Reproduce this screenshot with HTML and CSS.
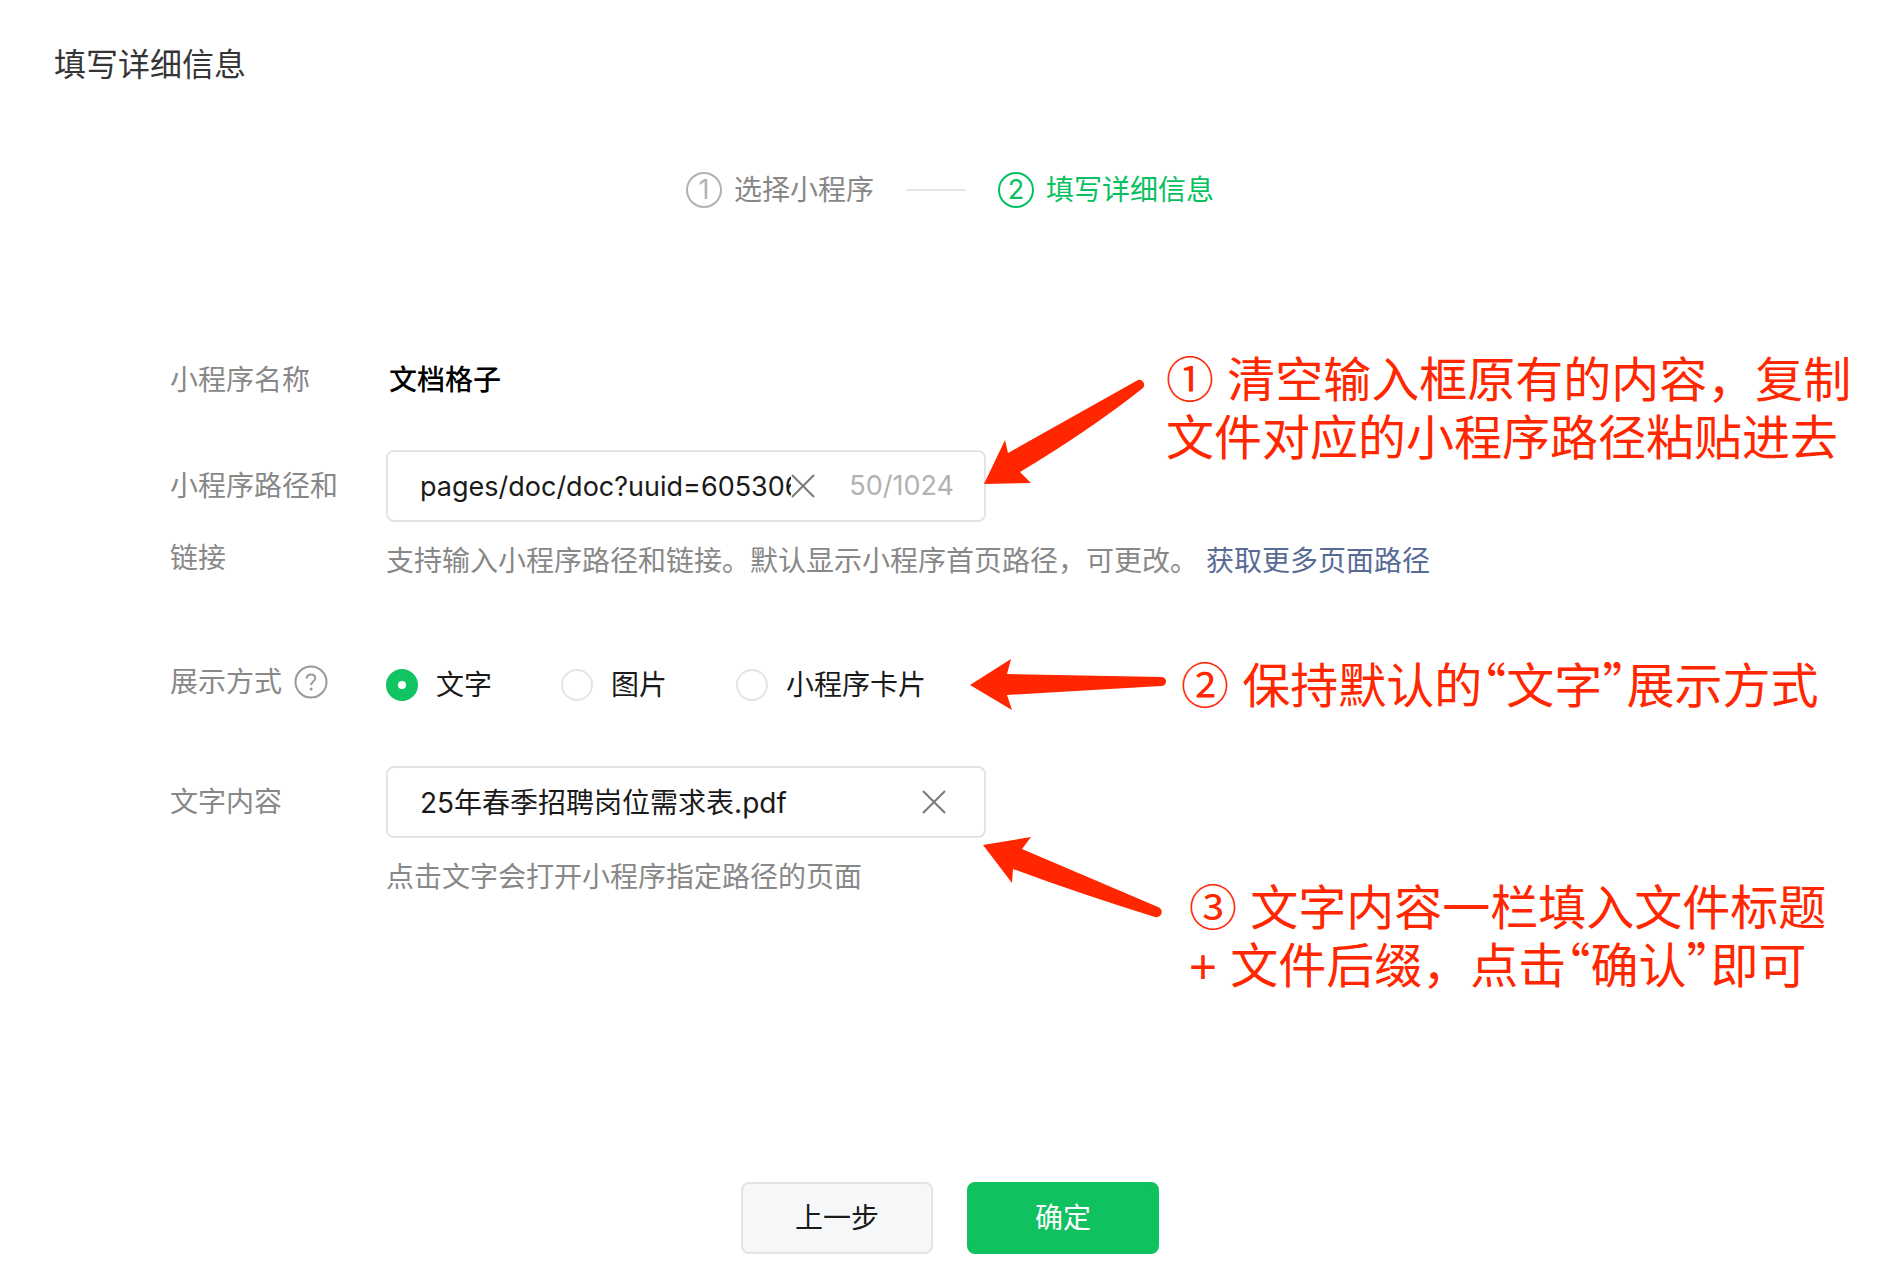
FILE: index.html
```html
<!DOCTYPE html>
<html lang="zh-CN">
<head>
<meta charset="utf-8">
<meta name="viewport" content="width=device-width, initial-scale=1">
<title>填写详细信息</title>
<link rel="stylesheet" href="styles.css">
</head>
<body>
<main class="page">
  <h1 class="title">填写详细信息</h1>

  <ol class="steps">
    <li class="step"><span class="step-num">1</span>选择小程序</li>
    <li class="step-line" aria-hidden="true"></li>
    <li class="step step-active" aria-current="step"><span class="step-num">2</span>填写详细信息</li>
  </ol>

  <form class="form" id="detail">
    <div class="row row-name">
      <span class="label">小程序名称</span>
      <div class="content name">文档格子</div>
    </div>

    <div class="row">
      <label class="label" for="path">小程序路径和链接</label>
      <div class="content">
        <div class="field">
          <input class="input input-path" id="path" type="text" value="pages/doc/doc?uuid=605306">
          <button class="clear" type="button" aria-label="清空路径"><svg viewBox="0 0 24 24"><path d="M1 1 23 23M23 1 1 23"/></svg></button>
          <span class="counter">50/1024</span>
        </div>
        <p class="help">支持输入小程序路径和链接。默认显示小程序首页路径，可更改。 <a class="link" href="#">获取更多页面路径</a></p>
      </div>
      <aside class="note note-path">
        <svg class="arrow" width="162" height="106" viewBox="0 0 162 106"><path d="M0 106 21 62 24 75 154 2A5 5 0 0 1 159 10Q106 52 36 94L47 105Z"/></svg>
        <p>① 清空输入框原有的内容，复制<br>文件对应的小程序路径粘贴进去</p>
      </aside>
    </div>

    <div class="row row-mode">
      <span class="label" id="mode-label">展示方式
        <svg class="question" viewBox="0 0 34 34"><circle cx="17" cy="17" r="15.5"/><path d="M12.6 13.6C12.8 10.900 14.600 9.500 17 9.500c2.500 0 4.300 1.500 4.300 3.700 0 3.200-4.200 3.500-4.200 7"/><circle class="dot" cx="17.100" cy="24" r="1.500"/></svg>
      </span>
      <div class="content options" role="radiogroup" aria-labelledby="mode-label">
        <label class="option"><input class="radio" type="radio" name="mode" checked>文字</label>
        <label class="option"><input class="radio" type="radio" name="mode">图片</label>
        <label class="option"><input class="radio" type="radio" name="mode">小程序卡片</label>
      </div>
      <aside class="note note-mode">
        <svg class="arrow" width="196" height="52" viewBox="0 0 196 52"><path d="M0 26 41 0 37 15 192 18A4 4 0 0 1 191 27L37 36 42 51Z"/></svg>
        <p>② 保持默认的<span class="quote">“</span>文字<span class="quote">”</span>展示方式</p>
      </aside>
    </div>

    <div class="row">
      <label class="label" for="text">文字内容</label>
      <div class="content">
        <div class="field field-text">
          <input class="input" id="text" type="text" value="25年春季招聘岗位需求表.pdf">
          <button class="clear" type="button" aria-label="清空文字"><svg viewBox="0 0 24 24"><path d="M1 1 23 23M23 1 1 23"/></svg></button>
        </div>
        <p class="help">点击文字会打开小程序指定路径的页面</p>
      </div>
      <aside class="note note-text">
        <svg class="arrow" width="180" height="82" viewBox="0 0 180 82"><path d="M0 8 48 0 39 12 175 70A5 5 0 0 1 172 80Q100 58 30 32L29 46Z"/></svg>
        <p>③ 文字内容一栏填入文件标题<br>+ 文件后缀，点击<span class="quote">“</span>确认<span class="quote">”</span>即可</p>
      </aside>
    </div>
  </form>

  <footer class="actions">
    <button class="btn" type="button">上一步</button>
    <button class="btn btn-primary" type="submit" form="detail">确定</button>
  </footer>
</main>
</body>
</html>
```
FILE: styles.css
```css
* {
  box-sizing: border-box;
}

body {
  margin: 0;
  background: #fff;
  color: #1a1a1a;
  font: 28px/42px Inter, "Noto Sans CJK SC", sans-serif;
}

p {
  margin: 0;
}

.page {
  display: flex;
  flex-direction: column;
  min-height: 100vh;
  padding: 44px 52px 24px 54px;
}

.title {
  margin: 0;
  color: #353535;
  font-size: 32px;
  font-weight: 400;
}

/* Progress */
.steps {
  display: flex;
  justify-content: center;
  align-items: center;
  gap: 32px;
  margin: 83px 0 0;
  padding: 0;
  list-style: none;
}

.step {
  display: flex;
  align-items: center;
  gap: 12px;
  color: #888;
}

.step-num {
  width: 36px;
  height: 36px;
  border: 2px solid #b2b2b2;
  border-radius: 50%;
  color: #b2b2b2;
  font-size: 27px;
  line-height: 32px;
  text-align: center;
}

.step-line {
  width: 60px;
  height: 2px;
  background: #e4e4e4;
}

.step-active,
.step-active .step-num {
  border-color: #07c160;
  color: #07c160;
}

/* Form */
.form {
  display: flex;
  flex-direction: column;
  gap: 48px;
  margin-top: 147px;
  padding-left: 116px;
}

.row {
  position: relative;
  display: flex;
  line-height: 72px;
}

.row-name {
  line-height: 44px;
}

.row-mode {
  padding-top: 7px;
  line-height: 66px;
}

.label {
  flex: none;
  display: flex;
  align-items: center;
  align-self: flex-start;
  gap: 12px;
  width: 168px;
  margin-right: 48px;
  color: #888;
}

.content {
  flex: 1;
}

.name {
  padding-left: 3px;
  color: #000;
  font-weight: 500;
}

.field {
  display: flex;
  align-items: center;
  width: 600px;
  height: 72px;
  padding: 0 30px 0 32px;
  border: 2px solid #e4e4e4;
  border-radius: 8px;
}

.field-text {
  padding-right: 38px;
}

.input {
  flex: 1;
  min-width: 0;
  height: 68px;
  padding: 2px 0 0;
  border: 0;
  outline: 0;
  background: none;
  color: #1a1a1a;
  font: inherit;
}

.input-path,
.counter {
  font-size: 27px;
}

.clear {
  width: 24px;
  height: 24px;
  padding: 0;
  border: 0;
  background: none;
  cursor: pointer;
}

.clear svg {
  display: block;
  fill: none;
  stroke: #7a7a7a;
  stroke-width: 2;
}

.counter {
  margin-left: 34px;
  color: #b2b2b2;
}

.help {
  margin-top: 18px;
  color: #888;
  line-height: 42px;
}

.link {
  color: #576b95;
  text-decoration: none;
}

.question {
  width: 34px;
  height: 34px;
  fill: none;
  stroke: #999;
  stroke-width: 2;
}

.question .dot {
  fill: #999;
  stroke: none;
}

.options {
  display: flex;
  gap: 69px;
  padding-top: 3px;
}

.option {
  display: flex;
  align-items: center;
  gap: 18px;
}

.radio {
  appearance: none;
  width: 32px;
  height: 32px;
  margin: 0;
  border: 2px solid #e4e4e4;
  border-radius: 50%;
}

.radio:checked {
  border: 12px solid #10c461;
}

/* Annotations laid over the form */
.note {
  position: absolute;
  color: #ff2600;
  font-family: "Liberation Sans", "Noto Sans CJK SC", sans-serif;
  font-size: 48px;
  line-height: 58px;
  white-space: nowrap;
}

.note p {
  position: absolute;
}

.arrow {
  display: block;
  fill: #ff2600;
}

.note-path {
  left: 814px;
  top: -72px;
}

.note-path p {
  left: 182px;
  top: -26px;
}

.note-mode {
  left: 800px;
  top: 17px;
}

.note-mode p {
  left: 211px;
  top: -1px;
}

.note-text {
  left: 813px;
  top: 71px;
}

.note-text p {
  left: 206px;
  top: 43px;
}

.quote {
  font-family: "Noto Sans CJK SC", sans-serif;
  font-feature-settings: "halt";
  line-height: 1;
}

/* Footer */
.actions {
  display: flex;
  justify-content: center;
  gap: 34px;
  margin-top: auto;
}

.btn {
  width: 192px;
  height: 72px;
  border: 2px solid #e4e4e4;
  border-radius: 8px;
  background: #f6f7f9;
  color: #1a1a1a;
  font: inherit;
  cursor: pointer;
}

.btn-primary {
  border-color: #10c160;
  background: #10c160;
  color: #fff;
}
```
